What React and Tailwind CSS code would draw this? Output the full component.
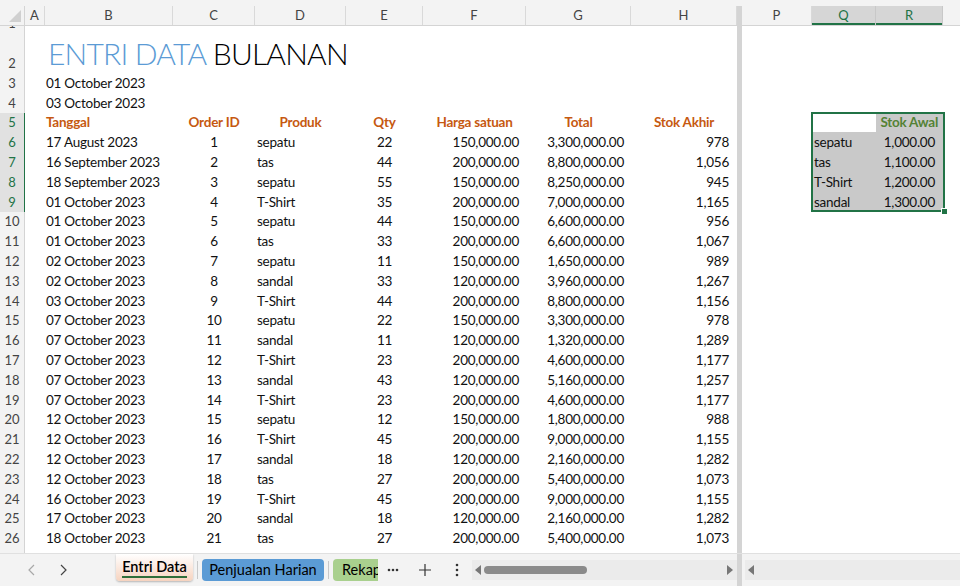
import React from 'react';

const cols = [
  { k: 'A', w: 'w-[20px]' },
  { k: 'B', w: 'w-[128px]' },
  { k: 'C', w: 'w-[82px]' },
  { k: 'D', w: 'w-[91px]' },
  { k: 'E', w: 'w-[77px]' },
  { k: 'F', w: 'w-[103px]' },
  { k: 'G', w: 'w-[105px]' },
  { k: 'H', w: 'w-[106px]' },
];

const rightCols = [
  { k: 'P', w: 'w-[70px]' },
  { k: 'Q', w: 'w-[64px]', sel: true },
  { k: 'R', w: 'w-[67px]', sel: true },
  { k: '', w: 'flex-1' },
];

const data = [
  ['17 August 2023', 1, 'sepatu', 22, '150,000.00', '3,300,000.00', '978'],
  ['16 September 2023', 2, 'tas', 44, '200,000.00', '8,800,000.00', '1,056'],
  ['18 September 2023', 3, 'sepatu', 55, '150,000.00', '8,250,000.00', '945'],
  ['01 October 2023', 4, 'T-Shirt', 35, '200,000.00', '7,000,000.00', '1,165'],
  ['01 October 2023', 5, 'sepatu', 44, '150,000.00', '6,600,000.00', '956'],
  ['01 October 2023', 6, 'tas', 33, '200,000.00', '6,600,000.00', '1,067'],
  ['02 October 2023', 7, 'sepatu', 11, '150,000.00', '1,650,000.00', '989'],
  ['02 October 2023', 8, 'sandal', 33, '120,000.00', '3,960,000.00', '1,267'],
  ['03 October 2023', 9, 'T-Shirt', 44, '200,000.00', '8,800,000.00', '1,156'],
  ['07 October 2023', 10, 'sepatu', 22, '150,000.00', '3,300,000.00', '978'],
  ['07 October 2023', 11, 'sandal', 11, '120,000.00', '1,320,000.00', '1,289'],
  ['07 October 2023', 12, 'T-Shirt', 23, '200,000.00', '4,600,000.00', '1,177'],
  ['07 October 2023', 13, 'sandal', 43, '120,000.00', '5,160,000.00', '1,257'],
  ['07 October 2023', 14, 'T-Shirt', 23, '200,000.00', '4,600,000.00', '1,177'],
  ['12 October 2023', 15, 'sepatu', 12, '150,000.00', '1,800,000.00', '988'],
  ['12 October 2023', 16, 'T-Shirt', 45, '200,000.00', '9,000,000.00', '1,155'],
  ['12 October 2023', 17, 'sandal', 18, '120,000.00', '2,160,000.00', '1,282'],
  ['12 October 2023', 18, 'tas', 27, '200,000.00', '5,400,000.00', '1,073'],
  ['16 October 2023', 19, 'T-Shirt', 45, '200,000.00', '9,000,000.00', '1,155'],
  ['17 October 2023', 20, 'sandal', 18, '120,000.00', '2,160,000.00', '1,282'],
  ['18 October 2023', 21, 'tas', 27, '200,000.00', '5,400,000.00', '1,073'],
];

const stok = [
  ['sepatu', '1,000.00'],
  ['tas', '1,100.00'],
  ['T-Shirt', '1,200.00'],
  ['sandal', '1,300.00'],
];

// row number -> height class
const rowH = (n) => (n === 1 ? 'h-[7px]' : n === 2 ? 'h-[40px]' : 'h-[19.8px]');

function RowHead({ n }) {
  const sel = n >= 5 && n <= 9;
  return (
    <div
      className={`w-[25px] shrink-0 ${rowH(n)} flex items-end justify-center overflow-hidden border-r text-[13px] leading-[19px] tracking-normal ${
        sel ? 'bg-[#e1e1e1] text-[#217346] border-[#217346]' : 'bg-[#f3f3f3] text-[#444] border-[#d4d4d4]'
      }`}
    >
      {n}
    </div>
  );
}

function Cell({ w, className = '', children }) {
  return <div className={`${w} shrink-0 h-full flex items-center whitespace-nowrap overflow-visible ${className}`}>{children}</div>;
}

function LeftRow({ n }) {
  const hd = 'justify-center font-bold text-[#c65911]';
  let cells = null;
  if (n === 2) {
    cells = (
      <Cell w="w-[400px]" className="pl-[3px] items-end">
        <span className="text-[30px] font-light leading-[40px] tracking-[-0.8px]">
          <span className="text-[#5b9bd5]">ENTRI DATA</span> <span className="text-black">BULANAN</span>
        </span>
      </Cell>
    );
  } else if (n === 3 || n === 4) {
    cells = (
      <Cell w="w-[128px]" className="pl-[1px]">
        {n === 3 ? '01 October 2023' : '03 October 2023'}
      </Cell>
    );
  } else if (n === 5) {
    cells = (
      <>
        <Cell w="w-[128px]" className="pl-[1px] font-bold text-[#c65911]">Tanggal</Cell>
        <Cell w="w-[82px]" className={hd}>Order ID</Cell>
        <Cell w="w-[91px]" className={hd}>Produk</Cell>
        <Cell w="w-[77px]" className={hd}>Qty</Cell>
        <Cell w="w-[103px]" className={hd}>Harga satuan</Cell>
        <Cell w="w-[105px]" className={hd}>Total</Cell>
        <Cell w="w-[106px]" className={hd}>Stok Akhir</Cell>
      </>
    );
  } else if (n >= 6 && n <= 26) {
    const r = data[n - 6];
    cells = (
      <>
        <Cell w="w-[128px]" className="pl-[1px]">{r[0]}</Cell>
        <Cell w="w-[82px]" className="justify-center">{r[1]}</Cell>
        <Cell w="w-[91px]" className="pl-[2px]">{r[2]}</Cell>
        <Cell w="w-[77px]" className="justify-center">{r[3]}</Cell>
        <Cell w="w-[103px]" className="justify-end pr-[7px]">{r[4]}</Cell>
        <Cell w="w-[105px]" className="justify-end pr-[7px]">{r[5]}</Cell>
        <Cell w="w-[106px]" className="justify-end pr-[8px]">{r[6]}</Cell>
      </>
    );
  }
  return (
    <div className={`flex shrink-0 ${rowH(n)}`}>
      <RowHead n={n} />
      <div className="flex h-full">
        <div className="w-[20px] shrink-0" />
        {cells}
      </div>
    </div>
  );
}

function RightRow({ n }) {
  let cells = null;
  if (n === 5) {
    cells = (
      <>
        <Cell w="w-[64px]" className="bg-white" />
        <Cell w="w-[67px]" className="bg-[#c9c9c9] justify-end pr-[5px] font-bold text-[#548235]">Stok Awal</Cell>
      </>
    );
  } else if (n >= 6 && n <= 9) {
    const r = stok[n - 6];
    cells = (
      <>
        <Cell w="w-[64px]" className="bg-[#c9c9c9] pl-[2px]">{r[0]}</Cell>
        <Cell w="w-[67px]" className="bg-[#c9c9c9] justify-end pr-[8px]">{r[1]}</Cell>
      </>
    );
  }
  return (
    <div className={`flex shrink-0 ${rowH(n)}`}>
      <div className="w-[70px] shrink-0" />
      {cells}
    </div>
  );
}

function ColHeads({ list }) {
  return (
    <div className="flex shrink-0 h-[20px] border-b border-[#d4d4d4] bg-[#f3f3f3] tracking-normal">
      {list.map((c, i) => (
        <div
          key={i}
          className={`${c.w} shrink-0 flex items-center justify-center text-[13px] border-r ${
            c.sel
              ? 'bg-[#d6d6d6] text-[#217346] border-[#c8c8c8] shadow-[inset_0_-2px_0_#217346]'
              : c.k === ''
              ? 'border-transparent'
              : 'text-[#444] border-[#d9d9d9]'
          }`}
        >
          {c.k}
        </div>
      ))}
    </div>
  );
}

const rows = Array.from({ length: 27 }, (_, i) => i + 1);

export default function App() {
  return (
    <div
      className="w-[960px] h-[586px] overflow-hidden flex flex-col bg-[#f3f3f3] text-[14.5px] text-black"
      style={{ fontFamily: 'Lato, "Open Sans", sans-serif' }}
    >
      <div className="h-[6px] shrink-0" />
      <div className="flex-1 flex overflow-hidden text-[13.5px] tracking-[-0.25px] text-[#111]">
        {/* left pane */}
        <div className="w-[737px] shrink-0 flex flex-col overflow-hidden bg-white">
          <div className="flex shrink-0">
            <div className="w-[25px] h-[20px] shrink-0 bg-[#f3f3f3] border-r border-b border-[#d4d4d4] flex items-end justify-end p-[3px]">
              <svg width="12" height="12" viewBox="0 0 12 12">
                <polygon points="12,0 12,12 0,12" fill="#d0d0d0" />
              </svg>
            </div>
            <ColHeads list={cols} />
          </div>
          {rows.map((n) => (
            <LeftRow key={n} n={n} />
          ))}
        </div>
        {/* split bar */}
        <div className="w-[5px] shrink-0 bg-[#d4d4d4]" />
        {/* right pane */}
        <div className="flex-1 flex flex-col overflow-hidden bg-white relative">
          <ColHeads list={rightCols} />
          {rows.map((n) => (
            <RightRow key={n} n={n} />
          ))}
          {/* selection outline */}
          <div className="absolute left-[69px] top-[106px] w-[134px] h-[100px] border-2 border-[#217346] pointer-events-none" />
          <div className="absolute left-[199px] top-[202px] w-[7px] h-[7px] bg-[#217346] border border-white" />
        </div>
      </div>
      {/* sheet tab bar */}
      <div className="h-[33px] shrink-0 flex bg-[#f3f3f3] border-t border-[#e0e0e0]">
        <div className="w-[737px] shrink-0 flex items-center">
          <div className="w-[116px] flex items-center pl-[26px] gap-[19px]">
            <svg width="12" height="14" viewBox="0 0 12 14"><path d="M8 2 L3 7 L8 12" fill="none" stroke="#a8a8a8" strokeWidth="1.2" /></svg>
            <svg width="12" height="14" viewBox="0 0 12 14"><path d="M4 2 L9 7 L4 12" fill="none" stroke="#444" strokeWidth="1.2" /></svg>
          </div>
          <div className="self-start h-[27px] w-[77px] flex flex-col items-center justify-center rounded-b-[4px] bg-gradient-to-b from-white to-[#f6d3bf] shadow-[0_1px_2px_rgba(0,0,0,0.25)]">
            <span className="text-[14.5px] font-semibold leading-[18px] border-b-2 border-[#2e6e3a]">Entri Data</span>
          </div>
          <div className="w-[1px] h-[18px] bg-[#c8c8c8] mx-[4px]" />
          <div className="h-[22px] w-[122px] flex items-center justify-center rounded-[4px] bg-[#5b9bd5]">Penjualan Harian</div>
          <div className="w-[1px] h-[18px] bg-[#c8c8c8] mx-[4px]" />
          <div className="h-[22px] w-[45px] overflow-hidden flex items-center pl-[9px] rounded-l-[4px] bg-[#a9d08e] whitespace-nowrap">Rekap</div>
          <div className="w-[30px] flex justify-center">
            <svg width="12" height="4" viewBox="0 0 12 4"><circle cx="2" cy="2" r="1.3" fill="#333" /><circle cx="6" cy="2" r="1.3" fill="#333" /><circle cx="10" cy="2" r="1.3" fill="#333" /></svg>
          </div>
          <div className="w-[34px] flex justify-center">
            <svg width="14" height="14" viewBox="0 0 14 14"><path d="M7 1 V13 M1 7 H13" stroke="#333" strokeWidth="1.2" /></svg>
          </div>
          <div className="w-[30px] flex justify-center">
            <svg width="4" height="14" viewBox="0 0 4 14"><circle cx="2" cy="2" r="1.3" fill="#333" /><circle cx="2" cy="7" r="1.3" fill="#333" /><circle cx="2" cy="12" r="1.3" fill="#333" /></svg>
          </div>
          <div className="flex-1 h-[20px] flex items-center bg-[#ebebeb] pl-[3px] pr-[4px]">
            <svg width="6" height="10" viewBox="0 0 6 10"><polygon points="6,0 6,10 0,5" fill="#777" /></svg>
            <div className="ml-[3px] w-[103px] h-[8px] rounded-full bg-[#8a8a8a]" />
            <div className="flex-1" />
            <svg width="6" height="10" viewBox="0 0 6 10"><polygon points="0,0 0,10 6,5" fill="#777" /></svg>
          </div>
        </div>
        <div className="w-[5px] shrink-0 bg-[#d4d4d4]" />
        <div className="flex-1 flex items-center pl-[3px]">
          <div className="flex-1 h-[20px] flex items-center bg-[#ebebeb] pl-[3px]">
            <svg width="6" height="10" viewBox="0 0 6 10"><polygon points="6,0 6,10 0,5" fill="#777" /></svg>
          </div>
        </div>
      </div>
    </div>
  );
}
